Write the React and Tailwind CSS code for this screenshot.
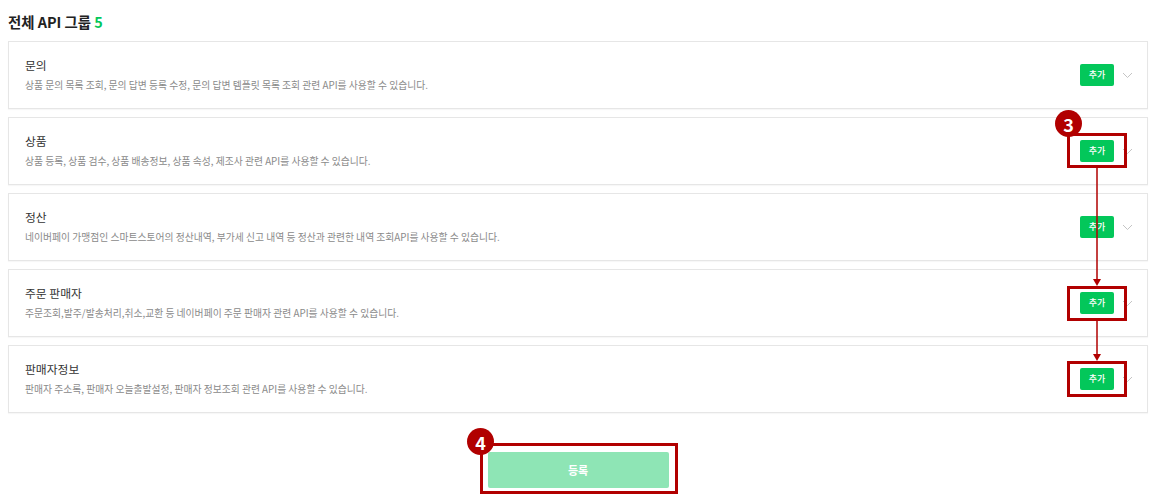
import React from "react";

const groups = [
  { title: "문의", desc: "상품 문의 목록 조회, 문의 답변 등록 수정, 문의 답변 템플릿 목록 조회 관련 API를 사용할 수 있습니다." },
  { title: "상품", desc: "상품 등록, 상품 검수, 상품 배송정보, 상품 속성, 제조사 관련 API를 사용할 수 있습니다." },
  { title: "정산", desc: "네이버페이 가맹점인 스마트스토어의 정산내역, 부가세 신고 내역 등 정산과 관련한 내역 조회API를 사용할 수 있습니다." },
  { title: "주문 판매자", desc: "주문조회,발주/발송처리,취소,교환 등 네이버페이 주문 판매자 관련 API를 사용할 수 있습니다." },
  { title: "판매자정보", desc: "판매자 주소록, 판매자 오늘출발설정, 판매자 정보조회 관련 API를 사용할 수 있습니다." },
];

function Chevron() {
  return (
    <svg width="11" height="7" viewBox="0 0 11 7" fill="none" className="ml-[8px]">
      <path d="M1 1l4.5 4.5L10 1" stroke="#c4c4c4" strokeWidth="1" />
    </svg>
  );
}

function Card({ title, desc }) {
  return (
    <div className="flex h-[68px] items-center justify-between border border-[#e6e6e6] pl-[16px] pr-[14px] shadow-[0_1px_1px_rgba(0,0,0,0.03)]">
      <div className="flex flex-col pb-[2px]">
        <div className="text-[11.8px] leading-[16px] text-[#333]">{title}</div>
        <div className="mt-[5px] text-[9.8px] leading-[14px] text-[#8a8a8a]">{desc}</div>
      </div>
      <div className="flex items-center">
        <button className="flex h-[22px] w-[34px] items-center justify-center rounded-[2px] bg-[#03c75a] text-[9px] font-medium text-white">
          추가
        </button>
        <Chevron />
      </div>
    </div>
  );
}

function Badge({ n, className }) {
  return (
    <div
      className={
        "absolute flex h-[27px] w-[27px] items-center justify-center rounded-full bg-[#b10000] text-[18px] font-bold leading-none text-white " +
        className
      }
    >
      {n}
    </div>
  );
}

export default function App() {
  return (
    <div
      className="relative h-[502px] w-[1157px] overflow-hidden bg-white px-[8px] pr-[9px]"
      style={{ fontFamily: '"Noto Sans CJK KR", "Noto Sans", sans-serif' }}
    >
      <div className="pt-[12px] text-[14.4px] font-bold leading-[20px] text-[#222]">
        전체 API 그룹 <span className="text-[#03c75a]">5</span>
      </div>
      <div className="mt-[9px] flex flex-col gap-[8px]">
        {groups.map((g) => (
          <Card key={g.title} {...g} />
        ))}
      </div>
      <div className="mt-[39px] flex justify-center">
        <button className="flex h-[36px] w-[181px] items-center justify-center rounded-[2px] bg-[#8ee5b5] text-[11px] font-bold text-white">
          등록
        </button>
      </div>

      {/* annotations */}
      <svg className="pointer-events-none absolute left-0 top-0" width="1157" height="502">
        <line x1="1097" y1="168" x2="1097" y2="280" stroke="#b10000" strokeWidth="1.5" />
        <path d="M1093 279 L1101 279 L1097 286 Z" fill="#b10000" />
        <line x1="1097" y1="321" x2="1097" y2="355" stroke="#b10000" strokeWidth="1.5" />
        <path d="M1093 354 L1101 354 L1097 361 Z" fill="#b10000" />
      </svg>
      <div className="absolute left-[1067px] top-[133px] h-[35px] w-[60px] border-[3px] border-[#b10000]" />
      <div className="absolute left-[1067px] top-[286px] h-[35px] w-[60px] border-[3px] border-[#b10000]" />
      <div className="absolute left-[1067px] top-[361px] h-[36px] w-[60px] border-[3px] border-[#b10000]" />
      <div className="absolute left-[480px] top-[443px] h-[51px] w-[198px] border-[3px] border-[#b10000]" />
      <Badge n="3" className="left-[1055px] top-[110px]" />
      <Badge n="4" className="left-[467px] top-[428px]" />
    </div>
  );
}
